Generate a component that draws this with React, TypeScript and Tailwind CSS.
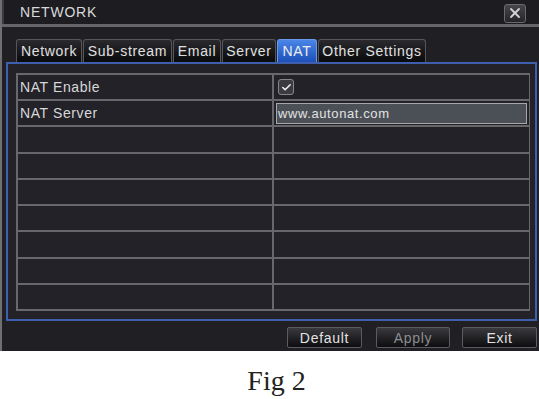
import React from 'react';
import { X, Check } from 'lucide-react';

const tabs = [
  { label: 'Network', w: 'w-[66px]' },
  { label: 'Sub-stream', w: 'w-[89px]' },
  { label: 'Email', w: 'w-[48px]' },
  { label: 'Server', w: 'w-[54px]' },
  { label: 'NAT', w: 'w-[40px]', active: true },
  { label: 'Other Settings', w: 'w-[108px]' },
];

const rows = ['NAT Enable', 'NAT Server', '', '', '', '', '', '', ''];

const App: React.FC = () => {
  return (
    <div className="w-[539px] h-[399px] bg-white flex flex-col font-['Liberation_Sans',Arial,sans-serif]">
      {/* DVR window */}
      <div className="h-[351px] bg-[#222228] border-l-2 border-[#707074] flex flex-col">
        {/* Title bar */}
        <div className="h-[24px] flex items-center justify-between pl-[16px] pr-[13px] bg-[#1c1c21] border-l-2 border-[#3c3c40]">
          <span className="text-[14px] tracking-[0.8px] text-[#dadada] leading-none">NETWORK</span>
          <div className="w-[22px] h-[19px] mt-[2px] rounded-[3px] bg-gradient-to-b from-[#46464b] to-[#26262a] border border-[#6a6a6e] flex items-center justify-center">
            <X size={16} strokeWidth={2.8} className="text-[#d2d2d5]" />
          </div>
        </div>
        <div className="h-[3px] bg-[#66666a]" />

        <div className="flex-1 flex flex-col pt-[12px] bg-[#1f1f24]">
          {/* Tabs */}
          <div className="flex gap-[1px] pl-[14px] h-[23px]">
            {tabs.map((t) => (
              <div
                key={t.label}
                className={`${t.w} h-full flex items-center justify-center rounded-t-[3px] border border-b-0 text-[14px] tracking-[0.7px] leading-none ${
                  t.active
                    ? 'bg-gradient-to-b from-[#4a86e8] to-[#1d4fb8] border-[#6a9ae8] text-[#eeeeee]'
                    : 'bg-gradient-to-b from-[#2a2a2e] to-[#0a0a0c] border-[#55555a] text-[#e0e0e0]'
                }`}
              >
                {t.label}
              </div>
            ))}
          </div>

          {/* Blue panel */}
          <div className="ml-[4px] w-[531px] h-[259px] border-2 border-[#3d5fae] bg-[#222228] pl-[8px] pt-[9px]">
            <div className="w-[514px] h-[238px] bg-[#68686c] p-[2px] grid grid-cols-[254px_1fr] grid-rows-9 gap-[2px]">
              {rows.map((r, i) => (
                <React.Fragment key={i}>
                  <div className="bg-[#222228] flex items-center pl-[2px] text-[14px] tracking-[0.6px] text-[#d8d8d8]">
                    {r}
                  </div>
                  <div className="bg-[#222228] flex items-center">
                    {i === 0 && (
                      <div className="ml-[4px] w-[16px] h-[16px] rounded-[3px] bg-[#3a3a40] border border-[#85858a] flex items-center justify-center">
                        <Check size={11} strokeWidth={3.5} className="text-[#f0f0f0]" />
                      </div>
                    )}
                    {i === 1 && (
                      <div className="mx-[2px] w-[251px] h-[21px] bg-[#4b5056] border border-[#a8a8ac] flex items-center pl-[1px] text-[13px] tracking-[0.6px] text-[#e2e2e2]">
                        www.autonat.com
                      </div>
                    )}
                  </div>
                </React.Fragment>
              ))}
            </div>
          </div>

          {/* Buttons */}
          <div className="flex mt-[6px] h-[21px] pl-[285px]">
            <button className="w-[75px] h-full rounded-[2px] border border-[#5c5c60] bg-gradient-to-b from-[#3a3a3e] to-[#0e0e10] text-[14px] tracking-[0.7px] text-[#e2e2e2] leading-none">
              Default
            </button>
            <button className="ml-[14px] w-[74px] h-full rounded-[2px] border border-[#5c5c60] bg-gradient-to-b from-[#3a3a3e] to-[#0e0e10] text-[14px] tracking-[0.7px] text-[#8c8c90] leading-none">
              Apply
            </button>
            <button className="ml-[12px] w-[75px] h-full rounded-[2px] border border-[#5c5c60] bg-gradient-to-b from-[#3a3a3e] to-[#0e0e10] text-[14px] tracking-[0.7px] text-[#e2e2e2] leading-none">
              Exit
            </button>
          </div>
        </div>
      </div>

      {/* Caption */}
      <div className="flex-1 flex items-center justify-center pl-[14px]">
        <span className="font-['Liberation_Serif','Times_New_Roman',serif] text-[28px] text-[#222] leading-none mt-[12px]">
          Fig 2
        </span>
      </div>
    </div>
  );
};

export default App;
